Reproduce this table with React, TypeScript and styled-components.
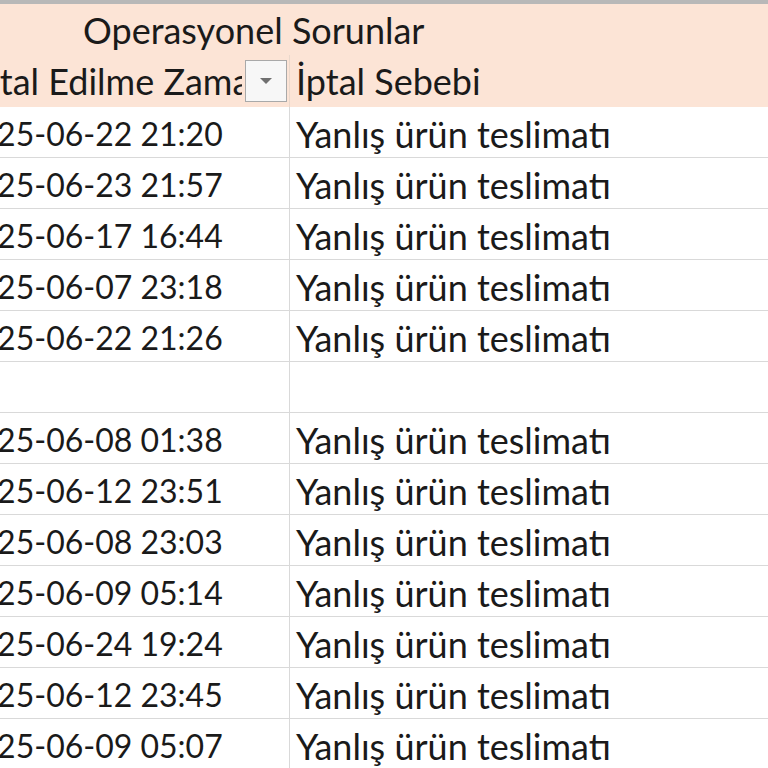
import { Fragment } from "react";
import styled, { createGlobalStyle } from "styled-components";

const GlobalStyle = createGlobalStyle`
  html, body {
    margin: 0;
    padding: 0;
    background: #ffffff;
    overflow: hidden;
  }
  body {
    font-family: Lato, "Liberation Sans", sans-serif;
    color: #1a1a1a;
  }
`;

const Sheet = styled.div`
  width: 768px;
  height: 768px;
  overflow: hidden;
  background: #fff;
  border-top: 4px solid #b8b8b8;
  box-sizing: border-box;
`;

// tablo sola kaymış, ilk sütunun başı ekran dışında kalıyor
const Grid = styled.div`
  display: grid;
  grid-template-columns: 330px 520px;
  margin-left: -40px;
`;

const GroupHeader = styled.div`
  grid-column: 1 / span 2;
  height: 51px;
  background: #fce4d6;
  display: flex;
  align-items: center;
  padding-left: 123px;
  font-size: 36px;
`;

const HeadCell = styled.div<{ $last?: boolean }>`
  height: 52px;
  background: #fce4d6;
  display: flex;
  align-items: center;
  gap: 3px;
  padding: 0 2px 0 6px;
  font-size: 36px;
  white-space: nowrap;
  overflow: hidden;
  border-right: ${(p) => (p.$last ? "none" : "1px solid #ead8cc")};
`;

const HeadText = styled.span<{ $shift?: number }>`
  flex: 1;
  overflow: hidden;
  margin-left: ${(p) => p.$shift ?? 0}px;
`;

const FilterButton = styled.div`
  flex: none;
  width: 40px;
  height: 40px;
  background: #f7f7f7;
  border: 1px solid #a9a9a9;
  display: flex;
  align-items: center;
  justify-content: center;
`;

const Cell = styled.div<{ $date?: boolean }>`
  height: 51px;
  box-sizing: border-box;
  display: flex;
  align-items: center;
  padding-top: 3px;
  padding-left: ${(p) => (p.$date ? "0" : "6px")};
  font-size: ${(p) => (p.$date ? "32px" : "36px")};
  white-space: nowrap;
  overflow: hidden;
  border-bottom: 1px solid #d9d9d9;
  border-right: ${(p) => (p.$date ? "1px solid #d9d9d9" : "none")};
`;

const rows = [
  "2025-06-22 21:20",
  "2025-06-23 21:57",
  "2025-06-17 16:44",
  "2025-06-07 23:18",
  "2025-06-22 21:26",
  "",
  "2025-06-08 01:38",
  "2025-06-12 23:51",
  "2025-06-08 23:03",
  "2025-06-09 05:14",
  "2025-06-24 19:24",
  "2025-06-12 23:45",
  "2025-06-09 05:07",
];

export default function App() {
  return (
    <>
      <GlobalStyle />
      <Sheet>
        <Grid>
          <GroupHeader>Operasyonel Sorunlar</GroupHeader>
          <HeadCell>
            <HeadText $shift={4}>İptal Edilme Zamanı</HeadText>
            <FilterButton>
              <svg width="14" height="8" viewBox="0 0 14 8">
                <path d="M1 1 L13 1 L7 7 Z" fill="#707070" />
              </svg>
            </FilterButton>
          </HeadCell>
          <HeadCell $last>
            <HeadText>İptal Sebebi</HeadText>
          </HeadCell>
          {rows.map((d, i) => (
            <Fragment key={i}>
              <Cell $date>{d}</Cell>
              <Cell>{d ? "Yanlış ürün teslimatı" : ""}</Cell>
            </Fragment>
          ))}
        </Grid>
      </Sheet>
    </>
  );
}
